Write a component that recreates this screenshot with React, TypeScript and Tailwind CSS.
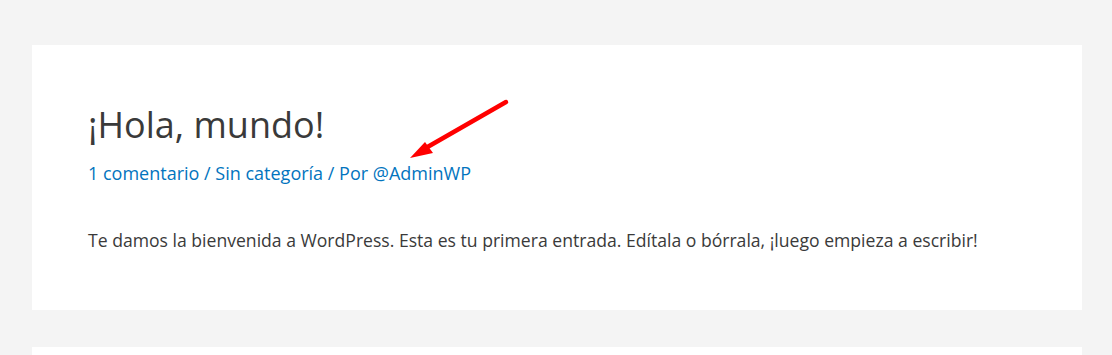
const App = () => {
  return (
    <div className="h-screen overflow-hidden bg-[#f4f4f4] pl-8 pr-[30px] pt-[45px] font-['Open_Sans',sans-serif]">
      {/* post card */}
      <article className="relative h-[265px] bg-white px-14 pt-[57px]">
        <h2 className="text-[36px] leading-[46px] font-normal text-[#3a3a3a]">¡Hola, mundo!</h2>
        <div className="mt-[11px] text-[18px] leading-[28px] text-[#0274be]">
          <span>1 comentario</span> / <span>Sin categoría</span> / <span>Por @AdminWP</span>
        </div>
        <p className="mt-[39px] text-[17.6px] leading-[28px] text-[#3a3a3a]">
          Te damos la bienvenida a WordPress. Esta es tu primera entrada. Edítala o bórrala, ¡luego empieza a escribir!
        </p>

        {/* annotation arrow */}
        <svg className="absolute left-0 top-0 pointer-events-none" width="1050" height="265" viewBox="0 0 1050 265">
          <line x1="474" y1="57" x2="392" y2="104" stroke="#ff0000" strokeWidth="4.5" strokeLinecap="round" />
          <polygon points="378,113 393,97 401,108" fill="#ff0000" />
        </svg>
      </article>

      <div className="mt-[37px] h-[40px] bg-white" />
    </div>
  );
};

export default App;
